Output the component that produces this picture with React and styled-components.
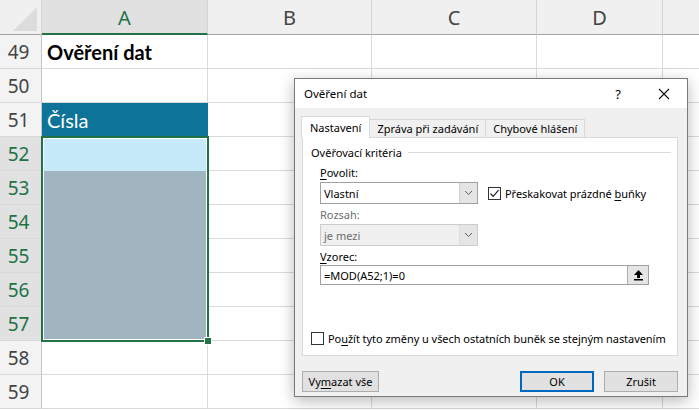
import React from "react";
import styled, { createGlobalStyle } from "styled-components";

const GlobalStyle = createGlobalStyle`
  html, body {
    margin: 0;
    padding: 0;
    background: #ffffff;
  }
  body {
    width: 699px;
    height: 410px;
    overflow: hidden;
  }
`;

const GREEN = "#217346";
const UI_FONT = `"Noto Sans", "Open Sans", sans-serif`;

const Page = styled.div`
  position: relative;
  width: 699px;
  height: 410px;
  overflow: hidden;
`;

const Sheet = styled.div`
  display: grid;
  grid-template-columns: 42px 166px 164px 165px 126px 80px;
  grid-template-rows: 35px repeat(11, 34px);
`;

const Corner = styled.div`
  box-sizing: border-box;
  background: #f0f0f0;
  border-right: 1px solid #d4d4d4;
  border-bottom: 1px solid #a5a5a5;
  display: flex;
  align-items: flex-end;
  justify-content: flex-end;
  padding: 0 4px 3px 0;
`;

const ColHeader = styled.div`
  box-sizing: border-box;
  background: ${(p) => (p.$active ? "#e1e1e1" : "#f0f0f0")};
  border-right: 1px solid #d4d4d4;
  border-bottom: ${(p) => (p.$active ? `2px solid ${GREEN}` : "1px solid #a5a5a5")};
  color: ${(p) => (p.$active ? GREEN : "#444444")};
  font-family: ${UI_FONT};
  font-size: 20px;
  display: flex;
  align-items: center;
  justify-content: center;
  padding-top: ${(p) => (p.$active ? "1px" : "0")};
`;

const RowHeader = styled.div`
  box-sizing: border-box;
  background: ${(p) => (p.$active ? "#e1e1e1" : "#f3f3f3")};
  border-right: 1px solid #c6c6c6;
  border-bottom: 1px solid #d8d8d8;
  color: ${(p) => (p.$active ? GREEN : "#444444")};
  font-family: ${UI_FONT};
  font-size: 19px;
  display: flex;
  align-items: center;
  justify-content: center;
  padding-right: 4px;
`;

const Cell = styled.div`
  box-sizing: border-box;
  background: ${(p) => p.$fill || "#ffffff"};
  border-right: 1px solid ${(p) => p.$fill || "#dadada"};
  border-bottom: 1px solid ${(p) => p.$fill || "#dadada"};
  font-family: "Lato", "Open Sans", sans-serif;
  font-size: 20px;
  font-weight: ${(p) => (p.$bold ? 700 : 400)};
  color: ${(p) => p.$color || "#000000"};
  display: flex;
  align-items: center;
  padding-left: 5px;
  white-space: nowrap;
`;

const Selection = styled.div`
  position: absolute;
  left: 41px;
  top: 136px;
  width: 168px;
  height: 206px;
  box-sizing: border-box;
  border: 2px solid ${GREEN};
  box-shadow: inset 0 0 0 1px #ffffff;
  pointer-events: none;
`;

const Handle = styled.div`
  position: absolute;
  right: -5px;
  bottom: -5px;
  width: 6px;
  height: 6px;
  background: ${GREEN};
  border: 1px solid #ffffff;
`;

/* ---------- dialog ---------- */

const Dialog = styled.div`
  position: absolute;
  left: 294px;
  top: 78px;
  width: 394px;
  height: 319px;
  box-sizing: border-box;
  border: 1px solid #7a7a7a;
  background: #f0f0f0;
  box-shadow: 0 4px 14px rgba(0, 0, 0, 0.28);
  font-family: ${UI_FONT};
  font-size: 11px;
  color: #000000;
  display: flex;
  flex-direction: column;
`;

const TitleBar = styled.div`
  height: 29px;
  background: #ffffff;
  display: flex;
  align-items: center;
  padding-left: 9px;
  font-size: 11.5px;
`;

const Title = styled.div`
  flex: 1;
`;

const TitleButton = styled.div`
  width: 46px;
  height: 29px;
  display: flex;
  align-items: center;
  justify-content: center;
  font-size: 13px;
`;

const Body = styled.div`
  flex: 1;
  display: flex;
  flex-direction: column;
  padding: 9px 9px 0 7px;
`;

const Tabs = styled.div`
  display: flex;
  align-items: flex-end;
  height: 21px;
  position: relative;
  z-index: 1;
  margin-bottom: -1px;
`;

const Tab = styled.div`
  box-sizing: border-box;
  height: ${(p) => (p.$selected ? "22px" : "19px")};
  padding: 0 ${(p) => (p.$selected ? "8px" : "7px")};
  margin-left: ${(p) => (p.$selected ? "-1px" : "0")};
  background: ${(p) => (p.$selected ? "#ffffff" : "#f0f0f0")};
  border: 1px solid #d9d9d9;
  border-bottom: ${(p) => (p.$selected ? "none" : "1px solid #d9d9d9")};
  border-left: ${(p) => (p.$first || p.$selected ? "1px solid #d9d9d9" : "none")};
  display: flex;
  align-items: center;
  white-space: nowrap;
`;

const Panel = styled.div`
  box-sizing: border-box;
  height: 219px;
  background: #ffffff;
  border: 1px solid #d9d9d9;
  padding: 6px 6px 0 8px;
  display: flex;
  flex-direction: column;
`;

const GroupTitle = styled.div`
  display: flex;
  align-items: center;
  gap: 6px;
  height: 16px;
  &::after {
    content: "";
    flex: 1;
    height: 1px;
    background: #dcdcdc;
  }
`;

const FieldArea = styled.div`
  padding-left: 9px;
  display: flex;
  flex-direction: column;
`;

const Label = styled.div`
  height: 16px;
  display: flex;
  align-items: center;
  margin-top: ${(p) => p.$mt || 0}px;
  color: ${(p) => (p.$disabled ? "#6d6d6d" : "#000000")};
`;

const U = styled.span`
  text-decoration: underline;
  text-underline-offset: 2px;
`;

const FieldRow = styled.div`
  display: flex;
  align-items: center;
  margin-top: ${(p) => p.$mt || 0}px;
`;

const Select = styled.div`
  box-sizing: border-box;
  width: 158px;
  height: 22px;
  border: 1px solid ${(p) => (p.$disabled ? "#cccccc" : "#a0a0a0")};
  background: ${(p) => (p.$disabled ? "#f0f0f0" : "#ffffff")};
  color: ${(p) => (p.$disabled ? "#6d6d6d" : "#000000")};
  display: flex;
  align-items: stretch;
`;

const SelectText = styled.div`
  flex: 1;
  display: flex;
  align-items: center;
  padding-left: 3px;
`;

const SelectButton = styled.div`
  width: 17px;
  border-left: 1px solid ${(p) => (p.$disabled ? "#dcdcdc" : "#cfcfcf")};
  background: #e5e5e5;
  display: flex;
  align-items: center;
  justify-content: center;
`;

const Check = styled.div`
  display: flex;
  align-items: center;
  gap: 4px;
  margin-left: ${(p) => p.$ml || 0}px;
  margin-bottom: ${(p) => p.$mb || 0}px;
  white-space: nowrap;
  letter-spacing: -0.05px;
`;

const Box = styled.div`
  box-sizing: border-box;
  flex-shrink: 0;
  width: 13px;
  height: 13px;
  border: 1px solid #333333;
  background: #ffffff;
  display: flex;
  align-items: center;
  justify-content: center;
`;

const Input = styled.div`
  box-sizing: border-box;
  width: 329px;
  height: 20px;
  margin-top: 1px;
  border: 1px solid #a0a0a0;
  background: #ffffff;
  display: flex;
  align-items: stretch;
`;

const InputText = styled.div`
  flex: 1;
  display: flex;
  align-items: center;
  padding-left: 3px;
`;

const RefButton = styled.div`
  width: 20px;
  border-left: 1px solid #adadad;
  background: #e5e5e5;
  display: flex;
  align-items: center;
  justify-content: center;
`;

const Spacer = styled.div`
  flex: 1;
`;

const Footer = styled.div`
  display: flex;
  align-items: center;
  height: 30px;
  margin-top: 10px;
`;

const Button = styled.div`
  box-sizing: border-box;
  width: ${(p) => p.$w || 74}px;
  height: 21px;
  margin-left: ${(p) => p.$ml || 0}px;
  background: #e1e1e1;
  border: ${(p) => (p.$primary ? "2px solid #0067c0" : "1px solid #adadad")};
  display: flex;
  align-items: center;
  justify-content: center;
  white-space: nowrap;
`;

const Chevron = () => (
  <svg width="9" height="6" viewBox="0 0 9 6">
    <path d="M1 1 L4.5 4.5 L8 1" fill="none" stroke="#606060" strokeWidth="1" />
  </svg>
);

const Tick = () => (
  <svg width="11" height="11" viewBox="0 0 11 11">
    <path d="M1.5 5.5 L4.2 8.3 L9.6 2.2" fill="none" stroke="#222" strokeWidth="1.2" />
  </svg>
);

const CloseIcon = () => (
  <svg width="12" height="12" viewBox="0 0 12 12">
    <path d="M1 1 L11 11 M11 1 L1 11" stroke="#111" strokeWidth="1.1" />
  </svg>
);

const UploadIcon = () => (
  <svg width="11" height="12" viewBox="0 0 11 12">
    <path d="M5.5 1 L10 6 L7 6 L7 9 L4 9 L4 6 L1 6 Z" fill="#000" />
    <rect x="1" y="10" width="9" height="1.5" fill="#000" />
  </svg>
);

const CornerMark = () => (
  <svg width="24" height="24" viewBox="0 0 24 24">
    <path d="M24 0 L24 24 L0 24 Z" fill="#dcdcdc" />
  </svg>
);

const columns = ["A", "B", "C", "D", ""];
const rows = [49, 50, 51, 52, 53, 54, 55, 56, 57, 58, 59];

const cellA = {
  49: { text: "Ověření dat", bold: true },
  51: { text: "Čísla", fill: "#0e7399", color: "#ffffff" },
  52: { fill: "#c6eafa" },
  53: { fill: "#a0b5c0" },
  54: { fill: "#a0b5c0" },
  55: { fill: "#a0b5c0" },
  56: { fill: "#a0b5c0" },
  57: { fill: "#a0b5c0" },
};

export default function App() {
  return (
    <Page>
      <GlobalStyle />
      <Sheet>
        <Corner>
          <CornerMark />
        </Corner>
        {columns.map((c, i) => (
          <ColHeader key={i} $active={c === "A"}>
            {c}
          </ColHeader>
        ))}
        {rows.map((r) => {
          const a = cellA[r] || {};
          return (
            <React.Fragment key={r}>
              <RowHeader $active={r >= 52 && r <= 57}>{r}</RowHeader>
              <Cell $fill={a.fill} $bold={a.bold} $color={a.color}>
                {a.text}
              </Cell>
              <Cell />
              <Cell />
              <Cell />
              <Cell />
            </React.Fragment>
          );
        })}
      </Sheet>

      <Selection>
        <Handle />
      </Selection>

      <Dialog>
        <TitleBar>
          <Title>Ověření dat</Title>
          <TitleButton>?</TitleButton>
          <TitleButton>
            <CloseIcon />
          </TitleButton>
        </TitleBar>
        <Body>
          <Tabs>
            <Tab $selected $first>
              Nastavení
            </Tab>
            <Tab>Zpráva při zadávání</Tab>
            <Tab>Chybové hlášení</Tab>
          </Tabs>
          <Panel>
            <GroupTitle>Ověřovací kritéria</GroupTitle>
            <FieldArea>
              <Label $mt={4}>
                <U>P</U>ovolit:
              </Label>
              <FieldRow $mt={2}>
                <Select>
                  <SelectText>Vlastní</SelectText>
                  <SelectButton>
                    <Chevron />
                  </SelectButton>
                </Select>
                <Check $ml={10}>
                  <Box>
                    <Tick />
                  </Box>
                  <span>
                    Přeskakovat prázdné <U>b</U>uňky
                  </span>
                </Check>
              </FieldRow>
              <Label $mt={2} $disabled>
                Rozsah:
              </Label>
              <FieldRow $mt={2}>
                <Select $disabled>
                  <SelectText>je mezi</SelectText>
                  <SelectButton $disabled>
                    <Chevron />
                  </SelectButton>
                </Select>
              </FieldRow>
              <Label $mt={2}>
                <U>V</U>zorec:
              </Label>
              <Input>
                <InputText>=MOD(A52;1)=0</InputText>
                <RefButton>
                  <UploadIcon />
                </RefButton>
              </Input>
            </FieldArea>
            <Spacer />
            <Check $mb={9}>
              <Box />
              <span>
                Po<U>u</U>žít tyto změny u všech ostatních buněk se stejným nastavením
              </span>
            </Check>
          </Panel>
          <Footer>
            <Button $w={77}>
              <span>
                Vy<U>m</U>azat vše
              </span>
            </Button>
            <Spacer />
            <Button $primary>OK</Button>
            <Button $ml={10}>Zrušit</Button>
          </Footer>
        </Body>
      </Dialog>
    </Page>
  );
}
